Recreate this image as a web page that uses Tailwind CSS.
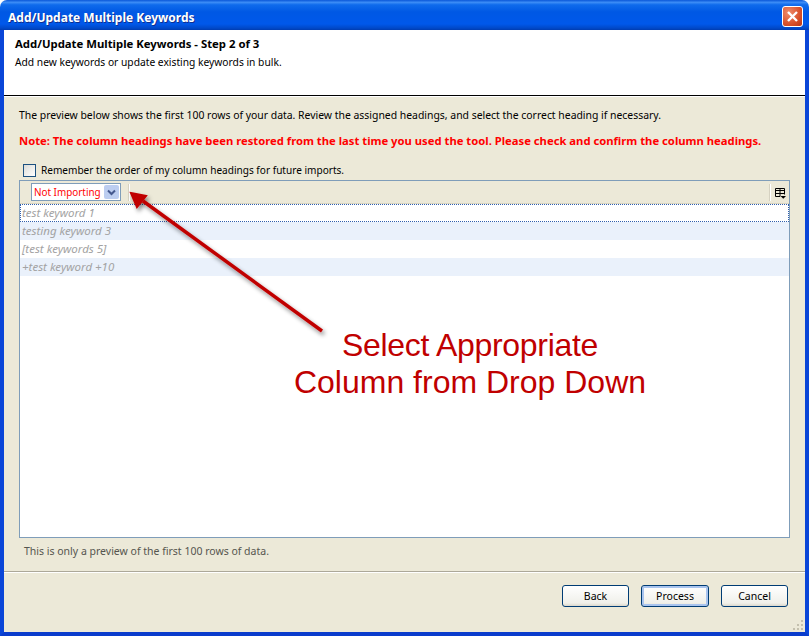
<!DOCTYPE html>
<html>
  <head>
    <meta charset="utf-8">
    <title>Add/Update Multiple Keywords</title>
    <script src="https://cdn.jsdelivr.net/npm/@tailwindcss/browser@4"></script>
  </head>
  <body class="bg-white">
    <div class="relative w-[809px] h-[636px] overflow-hidden flex flex-col rounded-t-[7px] font-['Noto_Sans','DejaVu_Sans',sans-serif] text-[10.5px] leading-[14px] text-black">

      <!-- title bar -->
      <div class="h-[30px] shrink-0 flex items-center justify-between pl-[8px] pr-[6px] bg-[linear-gradient(180deg,#0a57d8_0%,#3b8cf6_8%,#0f6bec_16%,#0058e4_40%,#0058ea_80%,#0048c8_94%,#003cb0_100%)]">
        <span class="mt-[5px] text-white font-bold text-[12px] [text-shadow:1px_1px_0_#0f2f90]">Add/Update Multiple Keywords</span>
        <button class="mt-[3px] w-[21px] h-[21px] rounded-[3px] border border-white bg-[radial-gradient(circle_at_30%_30%,#ee8c6c,#d9512a_60%,#b83412)] flex items-center justify-center">
          <svg width="13" height="13" viewBox="0 0 13 13"><path d="M2 2 L11 11 M11 2 L2 11" stroke="#fff" stroke-width="2.4"/></svg>
        </button>
      </div>

      <!-- window frame -->
      <div class="flex-1 min-h-0 flex flex-col border-x-[4px] border-b-[4px] border-x-[#0a46d8] border-b-[#0a3ccc] bg-[#ece9d8]">

        <!-- header -->
        <div class="h-[65px] shrink-0 bg-white pl-[11px] pt-[7px]">
          <div class="font-bold text-[11.35px] leading-[14px]">Add/Update Multiple Keywords - Step 2 of 3</div>
          <div class="mt-[4px] text-[10.25px]">Add new keywords or update existing keywords in bulk.</div>
        </div>
        <div class="h-px shrink-0 bg-black"></div>
        <div class="h-px shrink-0 bg-white"></div>

        <!-- body -->
        <div class="flex-1 min-h-0 flex flex-col pl-[15px] pr-[15px] pt-[11px]">
          <p class="text-[10.42px]">The preview below shows the first 100 rows of your data. Review the assigned headings, and select the correct heading if necessary.</p>
          <p class="mt-[12px] font-bold text-[11.25px] text-[#ff0000]">Note: The column headings have been restored from the last time you used the tool. Please check and confirm the column headings.</p>
          <label class="mt-[15px] flex items-center gap-[5px] pl-[4px]">
            <span class="w-[13px] h-[13px] border border-[#1c5180] bg-[linear-gradient(135deg,#dcdcd7,#ffffff)]"></span>
            <span class="text-[10.07px]">Remember the order of my column headings for future imports.</span>
          </label>

          <!-- grid -->
          <div class="mt-[3px] h-[358px] flex flex-col border border-[#7f9db9] bg-white">
            <div class="h-[23px] shrink-0 flex items-center justify-between bg-[#ece9d8] border-b border-[#d8d4c0]">
              <div class="flex items-center">
                <div class="ml-[11px] w-[90px] h-[18px] flex items-center justify-between border border-[#7f9db9] bg-white pl-[2px] pr-px">
                  <span class="whitespace-nowrap text-[#ff0000] text-[9.9px]">Not Importing</span>
                  <span class="shrink-0 w-[15px] h-[14px] rounded-[2px] bg-[#bccdf0] flex items-center justify-center">
                    <svg width="9" height="7" viewBox="0 0 9 7"><path d="M1 1.5 L4.5 5 L8 1.5" fill="none" stroke="#44588e" stroke-width="2"/></svg>
                  </span>
                </div>
                <div class="ml-[7px] w-[2px] h-[17px] bg-[#d6d2c2] border-r border-white"></div>
              </div>
              <div class="flex items-center">
                <div class="w-[2px] h-[17px] bg-[#d6d2c2] border-r border-white"></div>
                <svg class="mx-[3px] mt-[2px]" width="12" height="12" viewBox="0 0 12 12"><path d="M1.5 1.5 H10.5 V7.5 M1.5 1.5 V9.5 H6 M1.5 3.5 H10.5 M6 1.5 V9.5 M1.5 6.5 H10.5" fill="none" stroke="#000"/><path d="M6.5 9 H12 L9.25 11.75 Z" fill="#000"/></svg>
              </div>
            </div>
            <div class="italic text-[#a3a3a3] text-[11.5px] leading-[18px]">
              <div class="h-[18px] pl-[2px] outline-1 -outline-offset-1 outline-dotted outline-[#2f5fae]">test keyword 1</div>
              <div class="h-[18px] pl-[2px] bg-[#eaf1fb]">testing keyword 3</div>
              <div class="h-[18px] pl-[2px]">[test keywords 5]</div>
              <div class="h-[18px] pl-[2px] bg-[#eaf1fb]">+test keyword +10</div>
            </div>
          </div>

          <p class="mt-[6px] pl-[5px] text-[#55554f]">This is only a preview of the first 100 rows of data.</p>
        </div>

        <!-- footer -->
        <div class="h-[61px] shrink-0 relative border-t border-[#aca899] shadow-[inset_0_1px_0_#fff] flex justify-end gap-[12px] pt-[13px] pr-[17px]">
          <button class="w-[67px] h-[22px] rounded-[3px] border border-[#003c74] bg-[linear-gradient(180deg,#ffffff,#f0f0ea_85%,#dcd8cc)]">Back</button>
          <button class="w-[68px] h-[22px] rounded-[3px] border border-[#003c74] bg-[linear-gradient(180deg,#ffffff,#f0f0ea_85%,#dcd8cc)] shadow-[inset_0_0_0_2px_#a9c4ee]">Process</button>
          <button class="w-[67px] h-[22px] rounded-[3px] border border-[#003c74] bg-[linear-gradient(180deg,#ffffff,#f0f0ea_85%,#dcd8cc)]">Cancel</button>
          <svg class="absolute right-[1px] bottom-[1px]" width="12" height="12" viewBox="0 0 12 12" fill="#c4c0ae"><rect x="9" y="1" width="2" height="2"/><rect x="5" y="5" width="2" height="2"/><rect x="9" y="5" width="2" height="2"/><rect x="1" y="9" width="2" height="2"/><rect x="5" y="9" width="2" height="2"/><rect x="9" y="9" width="2" height="2"/></svg>
        </div>
      </div>

      <!-- annotation over the screenshot -->
      <svg class="absolute left-0 top-0 pointer-events-none" width="809" height="636" viewBox="0 0 809 636">
        <defs><filter id="arrowShadow" x="-20%" y="-20%" width="140%" height="140%"><feDropShadow dx="2" dy="3" stdDeviation="2" flood-color="#000" flood-opacity="0.45"/></filter></defs>
        <g filter="url(#arrowShadow)">
          <path d="M322 331 L143 201" stroke="#c00000" stroke-width="3.5" fill="none"/>
          <path d="M131 193 L146 196 L137 207 Z" fill="#c00000" stroke="#c00000" stroke-width="2"/>
        </g>
      </svg>
      <div class="absolute left-[270px] top-[327px] w-[400px] text-center font-['Liberation_Sans',sans-serif] text-[32px] leading-[37px] text-[#c00000]">
        <span class="tracking-[-0.3px]">Select Appropriate</span><br>Column from Drop Down
      </div>
    </div>
  </body>
</html>
